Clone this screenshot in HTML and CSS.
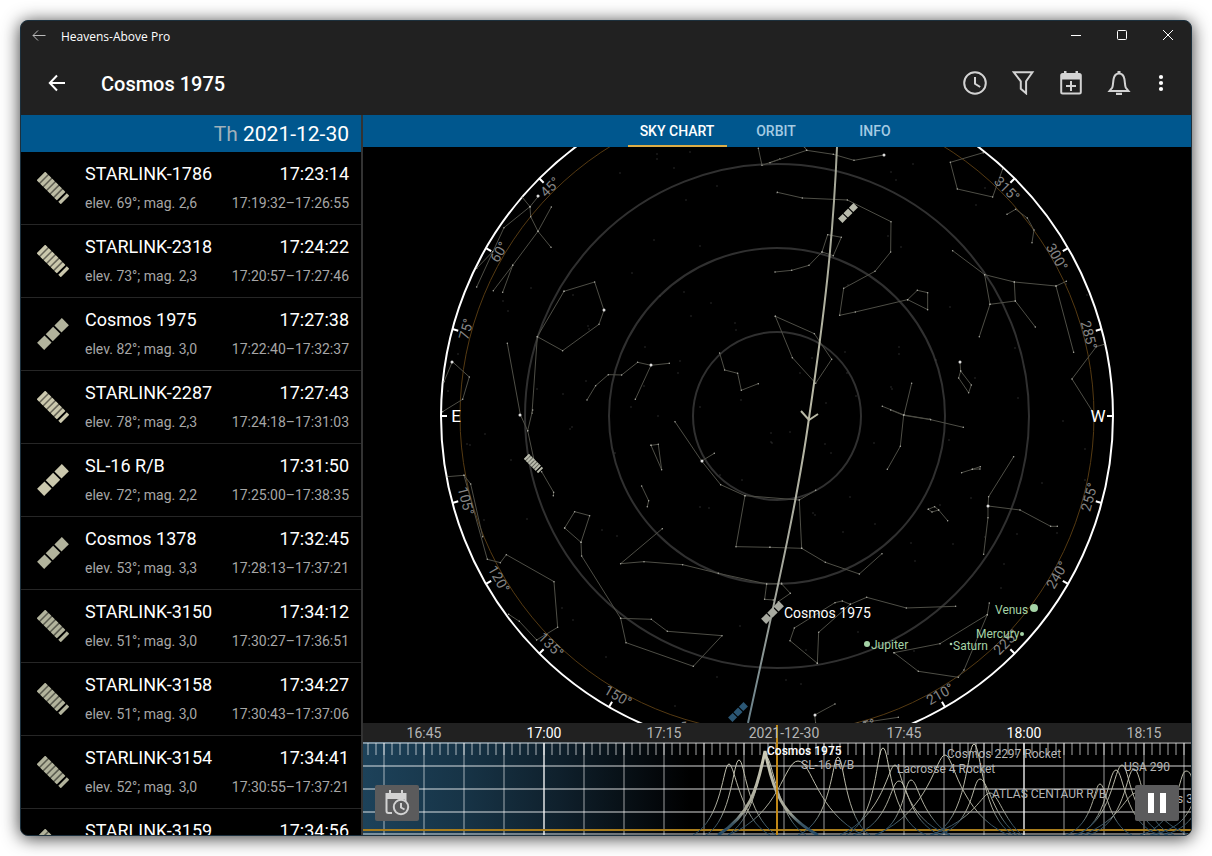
FILE: index.html
```html
<!DOCTYPE html>
<html lang="en">
<head>
<meta charset="utf-8">
<title>Heavens-Above Pro</title>
<meta name="viewport" content="width=device-width, initial-scale=1">
<link rel="stylesheet" href="styles.css">
</head>
<body>
<svg class="sprite" aria-hidden="true">
  <defs>
    <symbol id="rocket" viewBox="-16 -16 32 32">
      <g transform="rotate(-45)" fill="currentColor">
        <rect x="-17.500" y="-5" width="10.500" height="10"/>
        <rect x="-5.300" y="-5" width="10.500" height="10"/>
        <rect x="7" y="-5" width="10.500" height="10"/>
      </g>
    </symbol>
    <symbol id="starlink" viewBox="-16 -16 32 32">
      <g transform="rotate(45)" fill="currentColor">
        <rect x="-17" y="-6" width="28" height="12" opacity=".5"/>
        <path d="M-17-6h3.500v12h-3.500zM-12-6h3.500v12h-3.500zM-7-6h3.500v12h-3.500zM-2-6h3.500v12h-3.500zM3-6h3.500v12h-3.500zM8-6h3.500v12h-3.500zM13.500-6h3.500v12h-3.500z"/>
      </g>
    </symbol>
  </defs>
</svg>

<div class="window">
  <header class="titlebar">
    <button class="titlebar-back" aria-label="Back">
      <svg width="14" height="12" viewBox="0 0 14 12"><path d="M13.500 5.500H1M6 .5l-5 5 5 5"/></svg>
    </button>
    <span class="app-name">Heavens-Above Pro</span>
    <div class="window-controls">
      <button aria-label="Minimize"><svg width="12" height="12" viewBox="0 0 12 12"><path d="M1 5.500h10"/></svg></button>
      <button aria-label="Maximize"><svg width="12" height="12" viewBox="0 0 12 12"><rect x="1.500" y=".5" width="9" height="9" rx="1"/></svg></button>
      <button aria-label="Close"><svg width="12" height="12" viewBox="0 0 12 12"><path d="M1 0l10 10M11 0L1 10"/></svg></button>
    </div>
  </header>

  <div class="toolbar">
    <button class="nav-back" aria-label="Navigate up">
      <svg width="24" height="24" viewBox="0 0 24 24"><path d="M20 12H5M12 4.500L4.800 12l7.200 7.500"/></svg>
    </button>
    <h1>Cosmos 1975</h1>
    <div class="actions">
      <button aria-label="Time">
        <svg width="24" height="24" viewBox="0 0 24 24"><circle cx="12" cy="12" r="10.800"/><path d="M12 6v6.800l5.200 3.200"/></svg>
      </button>
      <button aria-label="Filter">
        <svg width="24" height="24" viewBox="0 0 24 24"><path d="M2.800 1.300h18.600l-6.300 9v12l-5.300-4.500v-7.500z"/></svg>
      </button>
      <button aria-label="Add to calendar">
        <svg width="24" height="24" viewBox="0 0 24 24"><rect x="2.200" y="3" width="19.600" height="19.400" rx="1.500"/><path d="M2 3h20v5.500H2zM5 0h2.500v4H5zM16.500 0H19v4h-2.500z" class="solid"/><path d="M12 10v10M7 15h10"/></svg>
      </button>
      <button aria-label="Notifications">
        <svg width="24" height="24" viewBox="0 0 24 24"><path d="M2.500 20h19l-2.800-3.500c-.9-2.500-.7-5.500-1.300-8.500C16.800 4.800 14.600 2.500 12 2.500S7.200 4.800 6.600 8c-.6 3-.4 6-1.300 8.500z"/><path d="M10.500 0h3v3h-3zM9 21.800h6v2.200H9z" class="solid"/></svg>
      </button>
      <button class="overflow" aria-label="More options">
        <svg width="24" height="24" viewBox="0 0 24 24"><g class="solid"><circle cx="12" cy="6" r="2.100"/><circle cx="12" cy="12" r="2.100"/><circle cx="12" cy="18" r="2.100"/></g></svg>
      </button>
    </div>
  </div>

  <div class="content">
    <aside class="sidebar">
      <h2 class="date-header"><span class="weekday">Th</span> 2021-12-30</h2>
      <ul class="passes">
        <li><button class="pass"><svg class="sat warm"><use href="#starlink"/></svg><span class="name">STARLINK-1786</span><span class="peak">17:23:14</span><span class="detail">elev. 69°; mag. 2,6</span><span class="range">17:19:32–17:26:55</span></button></li>
        <li><button class="pass"><svg class="sat bright"><use href="#starlink"/></svg><span class="name">STARLINK-2318</span><span class="peak">17:24:22</span><span class="detail">elev. 73°; mag. 2,3</span><span class="range">17:20:57–17:27:46</span></button></li>
        <li><button class="pass"><svg class="sat"><use href="#rocket"/></svg><span class="name">Cosmos 1975</span><span class="peak">17:27:38</span><span class="detail">elev. 82°; mag. 3,0</span><span class="range">17:22:40–17:32:37</span></button></li>
        <li><button class="pass"><svg class="sat bright"><use href="#starlink"/></svg><span class="name">STARLINK-2287</span><span class="peak">17:27:43</span><span class="detail">elev. 78°; mag. 2,3</span><span class="range">17:24:18–17:31:03</span></button></li>
        <li><button class="pass"><svg class="sat bright"><use href="#rocket"/></svg><span class="name">SL-16 R/B</span><span class="peak">17:31:50</span><span class="detail">elev. 72°; mag. 2,2</span><span class="range">17:25:00–17:38:35</span></button></li>
        <li><button class="pass"><svg class="sat"><use href="#rocket"/></svg><span class="name">Cosmos 1378</span><span class="peak">17:32:45</span><span class="detail">elev. 53°; mag. 3,3</span><span class="range">17:28:13–17:37:21</span></button></li>
        <li><button class="pass"><svg class="sat"><use href="#starlink"/></svg><span class="name">STARLINK-3150</span><span class="peak">17:34:12</span><span class="detail">elev. 51°; mag. 3,0</span><span class="range">17:30:27–17:36:51</span></button></li>
        <li><button class="pass"><svg class="sat"><use href="#starlink"/></svg><span class="name">STARLINK-3158</span><span class="peak">17:34:27</span><span class="detail">elev. 51°; mag. 3,0</span><span class="range">17:30:43–17:37:06</span></button></li>
        <li><button class="pass"><svg class="sat"><use href="#starlink"/></svg><span class="name">STARLINK-3154</span><span class="peak">17:34:41</span><span class="detail">elev. 52°; mag. 3,0</span><span class="range">17:30:55–17:37:21</span></button></li>
        <li><button class="pass"><svg class="sat"><use href="#starlink"/></svg><span class="name">STARLINK-3159</span><span class="peak">17:34:56</span></button></li>
      </ul>
    </aside>

    <main class="detail-pane">
      <nav class="tabs" role="tablist">
        <button role="tab" class="tab active" aria-selected="true">SKY CHART</button>
        <button role="tab" class="tab" aria-selected="false">ORBIT</button>
        <button role="tab" class="tab" aria-selected="false">INFO</button>
      </nav>

      <svg class="sky" viewBox="363 147 828 576" preserveAspectRatio="xMidYMid slice" role="img" aria-label="Sky chart">
        <defs>
          <marker id="star" viewBox="0 0 4 4" refX="2" refY="2" markerWidth="6" markerHeight="6" markerUnits="userSpaceOnUse"><circle cx="2" cy="2" r="1.500" fill="#a8a8a0"/></marker>
          <linearGradient id="track" gradientUnits="userSpaceOnUse" x1="0" y1="147" x2="0" y2="723">
            <stop offset="0" stop-color="#a3a596"/><stop offset=".45" stop-color="#b9b9a6"/><stop offset=".8" stop-color="#a0a39a"/><stop offset="1" stop-color="#68808a"/>
          </linearGradient>
        </defs>

        <g class="rings"><circle cx="777" cy="416" r="84"/><circle cx="777" cy="416" r="168"/><circle cx="777" cy="416" r="252"/></g>
        <circle class="ecliptic" cx="777" cy="416" r="317"/>
        <circle class="horizon" cx="777" cy="416" r="336"/>
        <circle class="ticks" cx="777" cy="416" r="333" pathLength="720"/>

        <!-- faint background stars -->
        <path class="dust" d="M657 154h0M657 159h0M674 168h0M690 152h0M717 186h0M686 200h0M620 173h0M777 193h0M654 240h0M700 246h0M632 273h0M684 292h0M660 296h0M711 303h0M691 316h0M735 323h0M588 326h0M589 329h0M503 301h0M508 311h0M573 295h0M531 288h0M736 330h0M680 361h0M678 373h0M644 386h0M631 407h0M586 381h0M563 394h0M537 389h0M645 347h0M700 407h0M741 400h0M458 354h0M448 391h0M572 427h0M570 429h0M485 434h0M467 444h0M470 445h0M511 460h0M615 453h0M658 416h0M771 433h0M772 443h0M720 475h0M742 480h0M700 507h0M709 508h0M484 520h0M527 519h0M602 530h0M617 536h0M562 608h0M573 620h0M740 626h0M717 677h0M606 657h0M675 706h0M891 172h0M896 180h0M913 164h0M888 236h0M985 188h0M976 205h0M901 247h0M848 285h0M950 307h0M845 352h0M847 373h0M899 347h0M899 354h0M891 387h0M892 389h0M826 403h0M936 360h0M812 358h0M800 373h0M975 378h0M1015 348h0M1018 398h0M856 396h0M1066 284h0M1087 295h0M771 442h0M825 444h0M874 443h0M949 440h0M831 453h0M850 497h0M813 513h0M815 515h0M843 532h0M875 524h0M911 543h0M915 561h0M971 498h0M1017 534h0M1042 483h0M1063 421h0M1085 480h0M1085 449h0M1057 533h0M953 544h0M985 537h0M940 505h0M786 680h0M801 684h0M806 650h0M858 632h0M914 651h0M1001 588h0M1004 564h0M790 432h0"/>

        <!-- constellations, one group per quadrant -->
        <g class="lines" transform="translate(430 140) scale(.3333)">
          <path d="M277 172L300 200L326 168M300 200L222 263L140 441M188 335L140 385M300 200L302 230L324 274L363 322M364 201L324 274L248 376L218 457M248 376L190 452"/>
          <path d="M402 454L494 426L522 511L507 553L398 632L322 590ZM322 590L306 820M232 610L271 824"/>
          <path d="M42 725L67 665L118 711L98 778L38 815"/>
          <path d="M471 780L497 737L535 704L575 705L623 667L663 676L718 670M663 676L616 778"/>
          <path d="M869 639L884 690L923 700L934 751L985 731M985 25L996 76L1050 57"/>
        </g>
        <g class="lines" transform="translate(770 140) scale(.3333)">
          <path d="M0 68L110 31L190 43L252 61L342 45M110 31L103 20"/>
          <path d="M22 157L97 174L232 180L363 245L362 336L315 394L221 445L209 526L256 516L413 479L442 451L473 458L473 509L413 479"/>
          <path d="M15 396L65 391L117 376L156 336L173 284L214 292L190 347L156 336"/>
          <path d="M16 529L133 581L185 658L137 730L67 653Z"/>
          <path d="M640 38L541 67L562 147L668 171L698 87M711 223L737 208L772 234L792 270L786 308"/>
          <path d="M548 332L644 404L733 426L858 438L889 424M858 438L911 637M644 404L660 493L736 483L733 426M736 483L796 561M660 493L628 590"/>
          <path d="M1003 613L979 620L906 717L968 815M570 665L572 693L604 735L596 758L566 714L572 693"/>
          <path d="M337 799L402 825L480 838M425 730L402 825"/>
        </g>
        <g class="lines" transform="translate(430 410) scale(.3333)">
          <path d="M271 14L293 62L308 0M293 62L312 150M335 185L371 247L370 257"/>
          <path d="M52 200L102 196L122 222L158 380M102 196L172 448L211 458L229 434L372 515L383 652L320 690L268 634L236 613"/>
          <path d="M404 354L434 305L479 317L453 397ZM453 397L455 438L572 625L664 628L712 664L876 677L790 769L588 698L572 625"/>
          <path d="M663 106L685 103L695 179ZM635 228L656 272L652 290"/>
          <path d="M735 35L815 153L853 130M815 153L872 224L945 257L918 410L1020 412M945 257L1108 270"/>
          <path d="M697 356L572 461L642 455L758 464L865 490L1010 522L1055 520M1010 522L1004 568L1030 570"/>
        </g>
        <g class="lines" transform="translate(770 410) scale(.3333)">
          <path d="M137 241L88 270L95 415L166 457L268 492L336 431M0 412L95 415"/>
          <path d="M362 0L401 16L482 29L580 52M401 16L391 109L352 178"/>
          <path d="M731 140L656 260L654 288L654 323L641 433M654 288L750 300L842 349L862 349"/>
          <path d="M575 188L607 178L631 170M607 178L630 177M475 298L494 290L506 300L486 306ZM506 300L533 332M35 522L61 550L25 575"/>
          <path d="M142 760L60 692L73 654L195 578L217 573L241 583L290 562L409 594L557 589M142 760L146 667L241 583"/>
          <path d="M372 728L510 701L652 614L658 579M652 614L582 780L565 802L445 784L372 728"/>
          <path d="M137 940L134 915L195 882M285 937L385 922"/>
        </g>
        <path class="bright-stars" d="M604 310h0M452 362h0M520 415h0M960 362h0M988 506h0M651 365h0M702 461h0M815 715h0M884 155h0M538 196h0"/>

        <g class="azimuths">
          <g transform="translate(550 187) rotate(-45)"><text dy="5">45°</text></g>
          <g transform="translate(499 252) rotate(-60)"><text dy="5">60°</text></g>
          <g transform="translate(466 329) rotate(-75)"><text dy="5">75°</text></g>
          <g transform="translate(466 501) rotate(75)"><text dy="5">105°</text></g>
          <g transform="translate(499 579) rotate(60)"><text dy="5">120°</text></g>
          <g transform="translate(551 645) rotate(45)"><text dy="5">135°</text></g>
          <g transform="translate(618 696) rotate(30)"><text dy="5">150°</text></g>
          <g transform="translate(694 729) rotate(15)"><text dy="5">165°</text></g>
          <g transform="translate(861 727) rotate(-15)"><text dy="5">195°</text></g>
          <g transform="translate(940 694) rotate(-30)"><text dy="5">210°</text></g>
          <g transform="translate(1006 642) rotate(-45)"><text dy="5">225°</text></g>
          <g transform="translate(1057 575) rotate(-60)"><text dy="5">240°</text></g>
          <g transform="translate(1089 497) rotate(-75)"><text dy="5">255°</text></g>
          <g transform="translate(1089 335) rotate(75)"><text dy="5">285°</text></g>
          <g transform="translate(1057 257) rotate(60)"><text dy="5">300°</text></g>
          <g transform="translate(1007 189) rotate(45)"><text dy="5">315°</text></g>
        </g>
        <g class="cardinals"><text x="456" y="422">E</text><text x="1098" y="422">W</text></g>

        <path class="track" d="M837 147C833 240 825 310 809 418C797 505 772 612 748 723"/>
        <path class="track-arrow" d="M801 411L809 420L818 414"/>
        <use href="#rocket" x="838" y="203" width="20" height="20" color="#b9bbac"/>
        <use href="#starlink" x="524" y="454" width="19" height="19" color="#b9bbac"/>
        <use href="#rocket" x="728" y="702" width="20" height="20" color="#2b5775"/>
        <use href="#rocket" x="761" y="601" width="23" height="23" color="#a8aaa0"/>
        <text class="sat-label" x="784" y="618">Cosmos 1975</text>

        <g class="planets">
          <circle cx="867" cy="644" r="3"/><text x="871" y="649">Jupiter</text>
          <circle cx="1034" cy="608" r="4"/><text x="995" y="614">Venus</text>
          <circle cx="1022" cy="634" r="2"/><text x="976" y="638">Mercury</text>
          <circle cx="951" cy="644" r="1.300"/><text x="953" y="650">Saturn</text>
        </g>
      </svg>

      <section class="timeline" aria-label="Timeline">
        <svg class="graph" viewBox="363 723 828 112" preserveAspectRatio="xMidYMid slice">
          <defs>
            <linearGradient id="dusk" gradientUnits="userSpaceOnUse" x1="363" y1="0" x2="690" y2="0">
              <stop offset="0" stop-color="#1d425a"/><stop offset=".3" stop-color="#173447"/><stop offset=".6" stop-color="#0f202c"/><stop offset="1" stop-color="#000"/>
            </linearGradient>
            <linearGradient id="pass" gradientUnits="userSpaceOnUse" x1="0" y1="743" x2="0" y2="835">
              <stop offset="0" stop-color="#d2d1bd"/><stop offset=".75" stop-color="#a5a597"/><stop offset=".88" stop-color="#3a5564"/><stop offset="1" stop-color="#244a66"/>
            </linearGradient>
            <pattern id="minor" patternUnits="userSpaceOnUse" x="367" y="743" width="8" height="12"><rect width="2" height="12" fill="#fff" fill-opacity=".32"/></pattern>
            <pattern id="major" patternUnits="userSpaceOnUse" x="383" y="743" width="40" height="92"><rect width="2" height="92" fill="#fff" fill-opacity=".3"/></pattern>
          </defs>
          <rect x="363" y="742" width="828" height="93" fill="#000"/>
          <rect x="363" y="742" width="828" height="93" fill="url(#dusk)"/>
          <rect x="363" y="723" width="828" height="19" fill="#212121"/>
          <rect x="363" y="743" width="828" height="12" fill="url(#minor)"/>
          <rect x="363" y="743" width="828" height="92" fill="url(#major)"/>
          <path class="hlines" d="M363 743H1191M363 766H1191M363 789H1191M363 812H1191M363 834H1191"/>
          <path class="hours" d="M544 743V835M1024 743V835"/>
          <path class="threshold" d="M363 830H1191"/>

          <g class="curves">
            <path d="M693 835C722 820 723 764 729 764S740 820 770 835"/>
            <path d="M706 835C732 820 733 760 739 760S746 815 776 835"/>
            <path class="selected" d="M718 835C750 815 757 790 765 751C773 790 781 815 818 835"/>
            <path d="M728 835C759 815 760 756 766 756S778 820 806 835"/>
            <path d="M728 835C780 815 784 761 798 761S816 812 863 835"/>
            <path d="M798 835C832 822 832 757 838 757S845 820 870 835"/>
            <path d="M846 835C878 820 876 748 883 748S888 820 926 835"/>
            <path d="M840 835C884 815 888 765 895 765S902 820 950 835"/>
            <path d="M853 835C890 825 890 781 899 781S907 820 940 835"/>
            <path d="M876 835C905 825 904 780 911 780S920 815 950 835"/>
            <path d="M875 835C930 812 936 755 945 755S958 812 1008 835"/>
            <path d="M932 835C968 822 967 744 974 744S982 820 1014 835"/>
            <path d="M938 835C974 825 972 779 980 779S994 820 1018 835"/>
            <path d="M930 835C975 820 982 793 990 793S1004 820 1022 835"/>
            <path d="M1066 835C1094 825 1094 784 1100 784S1108 825 1132 835"/>
            <path d="M1076 835C1108 825 1108 770 1116 770S1124 825 1160 835"/>
            <path d="M1074 835C1112 825 1114 765 1122 765S1130 825 1168 835"/>
            <path d="M1088 835C1126 825 1126 769 1134 769S1142 825 1174 835"/>
            <path d="M1082 835C1122 820 1126 793 1136 793S1158 825 1190 835"/>
            <path d="M1140 835C1180 825 1178 771 1186 771S1192 790 1196 800"/>
            <path d="M1150 835C1176 830 1186 820 1194 800M1164 835C1182 830 1190 822 1198 808"/>
          </g>
          <path class="now" d="M777 725V835"/>

          <g class="hours-text">
            <text x="424" y="738">16:45</text><text class="full" x="544" y="738">17:00</text><text x="664" y="738">17:15</text><text x="784" y="738">2021-12-30</text><text x="904" y="738">17:45</text><text class="full" x="1024" y="738">18:00</text><text x="1144" y="738">18:15</text>
          </g>
          <g class="names">
            <text class="current" x="767" y="755">Cosmos 1975</text>
            <text x="801" y="769">SL-16 R/B</text>
            <text x="897" y="773">Lacrosse 4 Rocket</text>
            <text x="947" y="758">Cosmos 2297 Rocket</text>
            <text x="992" y="798">ATLAS CENTAUR R/B</text>
            <text x="1124" y="771">USA 290</text>
            <text x="1177" y="803">s 3</text>
          </g>
        </svg>
        <button class="float-button pick-date" aria-label="Pick date and time">
          <svg width="26" height="28" viewBox="0 0 26 28"><path d="M8 24H4.500a2 2 0 0 1-2-2V5h19v7" fill="none" stroke="#d2d2d2" stroke-width="2"/><path d="M2 4h20v6H2zM5 1h2v4H5zM17 1h2v4h-2z" fill="#d2d2d2"/><circle cx="17" cy="18" r="7.200" fill="#5b5b5c" stroke="#d2d2d2" stroke-width="2"/><path d="M17 14v4.500l3.500 2" fill="none" stroke="#d2d2d2" stroke-width="2"/></svg>
        </button>
        <button class="float-button pause" aria-label="Pause">
          <svg width="20" height="20" viewBox="0 0 20 20"><path d="M1 0h6v20H1zM13 0h6v20h-6z" fill="#fff"/></svg>
        </button>
      </section>
    </main>
  </div>
</div>
</body>
</html>
```
FILE: styles.css
```css
* { box-sizing: border-box; }

body {
  margin: 0;
  padding: 20px;
  height: 100vh;
  background: #fff;
  color: #fff;
  font-family: Roboto, "Liberation Sans", sans-serif;
}

button {
  margin: 0;
  padding: 0;
  border: 0;
  background: none;
  color: inherit;
  font: inherit;
}

.sprite { position: absolute; width: 0; height: 0; }

.window {
  display: flex;
  flex-direction: column;
  height: 100%;
  border: 1px solid #1c303d;
  border-radius: 8px;
  background: #212121;
  box-shadow: 0 2px 18px rgba(0, 0, 0, .8);
  overflow: hidden;
}

/* Window title bar */
.titlebar {
  display: flex;
  flex: none;
  align-items: center;
  height: 30px;
  padding-left: 11px;
}

.titlebar svg { display: block; fill: none; stroke: #fff; }
.titlebar-back svg { stroke: #bbb; }

.app-name {
  flex: 1;
  margin-left: 15px;
  padding-top: 2px;
  font: 12px/16px "Open Sans", "Noto Sans", sans-serif;
}

.window-controls { display: flex; }
.window-controls button {
  display: grid;
  place-items: center;
  width: 46px;
  height: 28px;
}

/* App toolbar */
.toolbar {
  display: flex;
  flex: none;
  align-items: center;
  height: 64px;
  padding: 0 12px 0 24px;
}

.toolbar svg {
  display: block;
  fill: none;
  stroke: #d3d3d3;
  stroke-width: 2;
}

.toolbar .solid { fill: #d3d3d3; stroke: none; }
.toolbar .nav-back svg { stroke: #fff; }
.toolbar .overflow .solid { fill: #fff; }

.toolbar h1 {
  flex: 1;
  margin: 0 0 0 32px;
  padding-top: 2px;
  font-size: 20px;
  line-height: 28px;
  font-weight: 500;
}

.actions { display: flex; }
.actions button { display: grid; place-items: center; width: 48px; height: 48px; }
.actions .overflow { width: 36px; }

/* Panes */
.content {
  display: flex;
  flex: 1;
  min-height: 0;
  background: #000;
}

.sidebar {
  display: flex;
  flex: none;
  flex-direction: column;
  width: 342px;
  border-right: 2px solid #333;
}

.date-header {
  flex: none;
  margin: 0;
  padding: 2px 12px 0 0;
  background: #00578e;
  font-size: 21px;
  line-height: 35px;
  font-weight: 400;
  text-align: right;
}

.weekday { color: #9fb0bb; }

.passes {
  flex: 1;
  min-height: 0;
  margin: 0;
  padding: 0;
  list-style: none;
  overflow: hidden;
}

.pass {
  display: grid;
  grid-template-columns: 32px auto auto;
  grid-template-rows: 24px 20px;
  column-gap: 16px;
  row-gap: 7px;
  align-items: center;
  width: 100%;
  height: 73px;
  padding: 10px 12px 11px 16px;
  border-bottom: 1px solid #262626;
  text-align: left;
}

.sat {
  grid-row: 1 / 3;
  width: 32px;
  height: 32px;
  color: #b2b39c;
  overflow: visible;
}

.sat.warm { color: #bdbca4; }
.sat.bright { color: #cbc8ad; }
.name, .peak { font-size: 18px; line-height: 24px; }
.detail, .range { color: #a6a6a6; font-size: 14px; line-height: 20px; }
.peak, .range { text-align: right; }

.detail-pane {
  display: flex;
  flex: 1;
  flex-direction: column;
  min-width: 0;
}

.tabs {
  display: flex;
  flex: none;
  justify-content: center;
  height: 32px;
  padding-right: 2px;
  background: #00578e;
}

.tab {
  width: 99px;
  border-top: 2px solid transparent;
  border-bottom: 2px solid transparent;
  color: #a5cbe3;
  font-size: 14px;
  line-height: 20px;
  font-weight: 500;
}

.tab.active { border-bottom-color: #dcae48; color: #fff; }

/* Sky chart */
.sky {
  flex: 1;
  width: 100%;
  min-height: 0;
  background: #000;
}

.rings { fill: none; stroke: #303030; stroke-width: 2; }
.ecliptic { fill: none; stroke: #553a12; }
.horizon { fill: none; stroke: #fff; stroke-width: 2; }
.ticks { fill: none; stroke: #fff; stroke-width: 6; stroke-dasharray: .7 29.3; stroke-dashoffset: .35; }
.dust { stroke: #505050; stroke-width: 1; stroke-linecap: square; }

.lines path {
  fill: none;
  stroke: #4e4e46;
  stroke-width: 3;
  marker: url(#star);
}

.lines marker { stroke: none; }
#star { overflow: visible; }
.bright-stars { stroke: #ddd; stroke-width: 3; stroke-linecap: round; }
.azimuths { fill: #858585; font-size: 14px; text-anchor: middle; }
.cardinals { fill: #fff; font-size: 17px; text-anchor: middle; }
.track { fill: none; stroke: url(#track); stroke-width: 2; }
.track-arrow { fill: none; stroke: #b9b9a6; stroke-width: 2; }
.sat-label { fill: #fff; font-size: 14px; }
.planets { fill: #a5d3a6; font-size: 12px; }

/* Timeline */
.timeline { position: relative; flex: none; height: 112px; }
.graph { display: block; width: 100%; height: 100%; }
.hlines { stroke: #fff; stroke-opacity: .42; stroke-width: 2; }
.hours { stroke: #fff; stroke-opacity: .5; stroke-width: 2; }
.threshold { stroke: #a87c1c; stroke-width: 2; }
.curves { fill: none; stroke: url(#pass); }
.curves .selected { stroke-width: 3; }
.now { stroke: #c08717; stroke-width: 2; }
.hours-text { fill: #b5b5b5; font-size: 14px; text-anchor: middle; }
.hours-text .full { fill: #fff; }
.names { fill: #b5b5b5; font-size: 12px; }
.names .current { fill: #fff; font-weight: 500; }

.float-button {
  position: absolute;
  bottom: 14px;
  display: grid;
  place-items: center;
  width: 44px;
  height: 36px;
  border-radius: 2px;
  background: #5b5b5c;
}

.pick-date { left: 12px; }
.pause { right: 12px; }
```
